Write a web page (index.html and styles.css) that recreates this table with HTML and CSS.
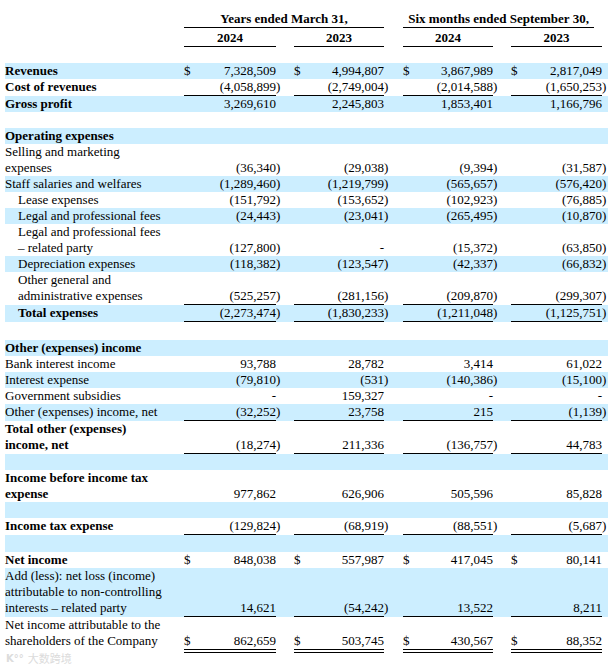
FILE: index.html
```html
<!DOCTYPE html>
<html lang="en">
<head>
<meta charset="utf-8">
<title>Statements of operations</title>
<link rel="stylesheet" href="styles.css">
</head>
<body>
<div class="page">
<table class="fin">
  <colgroup>
    <col class="c-lbl">
    <col class="c-cur"><col class="c-num1"><col class="c-par"><col class="c-gap">
    <col class="c-cur"><col class="c-num"><col class="c-par"><col class="c-gap2">
    <col class="c-cur"><col class="c-num"><col class="c-par"><col class="c-gap">
    <col class="c-cur"><col class="c-num4"><col class="c-par4">
  </colgroup>
  <thead>
    <tr class="h1">
      <td></td>
      <td colspan="6" class="hd"><div class="hline">Years ended March 31,</div></td>
      <td></td><td></td>
      <td colspan="6" class="hd"><div class="hline short">Six months ended September 30,</div></td>
      <td></td>
    </tr>
    <tr class="h2">
      <td></td>
      <td colspan="2" class="hd yr">2024</td><td></td><td></td>
      <td colspan="2" class="hd yr">2023</td><td></td><td></td>
      <td colspan="2" class="hd yr">2024</td><td></td><td></td>
      <td colspan="2" class="hd yr">2023</td><td></td>
    </tr>
    <tr class="sp"><td colspan="16"></td></tr>
  </thead>
  <tbody>
    <tr class="bl b">
      <td class="lbl">Revenues</td>
      <td class="cur">$</td><td class="num">7,328,509</td><td class="par"></td><td></td>
      <td class="cur">$</td><td class="num">4,994,807</td><td class="par"></td><td></td>
      <td class="cur">$</td><td class="num">3,867,989</td><td class="par"></td><td></td>
      <td class="cur">$</td><td class="num">2,817,049</td><td class="par"></td>
    </tr>
    <tr class="b ul">
      <td class="lbl">Cost of revenues</td>
      <td class="cur"></td><td class="num">(4,058,899</td><td class="par">)</td><td></td>
      <td class="cur"></td><td class="num">(2,749,004</td><td class="par">)</td><td></td>
      <td class="cur"></td><td class="num">(2,014,588</td><td class="par">)</td><td></td>
      <td class="cur"></td><td class="num">(1,650,253</td><td class="par">)</td>
    </tr>
    <tr class="bl b">
      <td class="lbl">Gross profit</td>
      <td class="cur"></td><td class="num">3,269,610</td><td class="par"></td><td></td>
      <td class="cur"></td><td class="num">2,245,803</td><td class="par"></td><td></td>
      <td class="cur"></td><td class="num">1,853,401</td><td class="par"></td><td></td>
      <td class="cur"></td><td class="num">1,166,796</td><td class="par"></td>
    </tr>
    <tr class="sp"><td colspan="16"></td></tr>

    <tr class="bl b">
      <td class="lbl" colspan="16">Operating expenses</td>
    </tr>
    <tr>
      <td class="lbl">Selling and marketing<br>expenses</td>
      <td class="cur"></td><td class="num">(36,340</td><td class="par">)</td><td></td>
      <td class="cur"></td><td class="num">(29,038</td><td class="par">)</td><td></td>
      <td class="cur"></td><td class="num">(9,394</td><td class="par">)</td><td></td>
      <td class="cur"></td><td class="num">(31,587</td><td class="par">)</td>
    </tr>
    <tr class="bl">
      <td class="lbl">Staff salaries and welfares</td>
      <td class="cur"></td><td class="num">(1,289,460</td><td class="par">)</td><td></td>
      <td class="cur"></td><td class="num">(1,219,799</td><td class="par">)</td><td></td>
      <td class="cur"></td><td class="num">(565,657</td><td class="par">)</td><td></td>
      <td class="cur"></td><td class="num">(576,420</td><td class="par">)</td>
    </tr>
    <tr>
      <td class="lbl ind">Lease expenses</td>
      <td class="cur"></td><td class="num">(151,792</td><td class="par">)</td><td></td>
      <td class="cur"></td><td class="num">(153,652</td><td class="par">)</td><td></td>
      <td class="cur"></td><td class="num">(102,923</td><td class="par">)</td><td></td>
      <td class="cur"></td><td class="num">(76,885</td><td class="par">)</td>
    </tr>
    <tr class="bl">
      <td class="lbl ind">Legal and professional fees</td>
      <td class="cur"></td><td class="num">(24,443</td><td class="par">)</td><td></td>
      <td class="cur"></td><td class="num">(23,041</td><td class="par">)</td><td></td>
      <td class="cur"></td><td class="num">(265,495</td><td class="par">)</td><td></td>
      <td class="cur"></td><td class="num">(10,870</td><td class="par">)</td>
    </tr>
    <tr>
      <td class="lbl ind">Legal and professional fees<br>– related party</td>
      <td class="cur"></td><td class="num">(127,800</td><td class="par">)</td><td></td>
      <td class="cur"></td><td class="num dash">-</td><td class="par"></td><td></td>
      <td class="cur"></td><td class="num">(15,372</td><td class="par">)</td><td></td>
      <td class="cur"></td><td class="num">(63,850</td><td class="par">)</td>
    </tr>
    <tr class="bl">
      <td class="lbl ind">Depreciation expenses</td>
      <td class="cur"></td><td class="num">(118,382</td><td class="par">)</td><td></td>
      <td class="cur"></td><td class="num">(123,547</td><td class="par">)</td><td></td>
      <td class="cur"></td><td class="num">(42,337</td><td class="par">)</td><td></td>
      <td class="cur"></td><td class="num">(66,832</td><td class="par">)</td>
    </tr>
    <tr class="ul">
      <td class="lbl ind">Other general and<br>administrative expenses</td>
      <td class="cur"></td><td class="num">(525,257</td><td class="par">)</td><td></td>
      <td class="cur"></td><td class="num">(281,156</td><td class="par">)</td><td></td>
      <td class="cur"></td><td class="num">(209,870</td><td class="par">)</td><td></td>
      <td class="cur"></td><td class="num">(299,307</td><td class="par">)</td>
    </tr>
    <tr class="bl b ul">
      <td class="lbl ind">Total expenses</td>
      <td class="cur"></td><td class="num">(2,273,474</td><td class="par">)</td><td></td>
      <td class="cur"></td><td class="num">(1,830,233</td><td class="par">)</td><td></td>
      <td class="cur"></td><td class="num">(1,211,048</td><td class="par">)</td><td></td>
      <td class="cur"></td><td class="num">(1,125,751</td><td class="par">)</td>
    </tr>
    <tr class="sp sp18"><td colspan="16"></td></tr>

    <tr class="bl b">
      <td class="lbl" colspan="16">Other (expenses) income</td>
    </tr>
    <tr>
      <td class="lbl">Bank interest income</td>
      <td class="cur"></td><td class="num">93,788</td><td class="par"></td><td></td>
      <td class="cur"></td><td class="num">28,782</td><td class="par"></td><td></td>
      <td class="cur"></td><td class="num">3,414</td><td class="par"></td><td></td>
      <td class="cur"></td><td class="num">61,022</td><td class="par"></td>
    </tr>
    <tr class="bl">
      <td class="lbl">Interest expense</td>
      <td class="cur"></td><td class="num">(79,810</td><td class="par">)</td><td></td>
      <td class="cur"></td><td class="num">(531</td><td class="par">)</td><td></td>
      <td class="cur"></td><td class="num">(140,386</td><td class="par">)</td><td></td>
      <td class="cur"></td><td class="num">(15,100</td><td class="par">)</td>
    </tr>
    <tr>
      <td class="lbl">Government subsidies</td>
      <td class="cur"></td><td class="num dash">-</td><td class="par"></td><td></td>
      <td class="cur"></td><td class="num">159,327</td><td class="par"></td><td></td>
      <td class="cur"></td><td class="num dash">-</td><td class="par"></td><td></td>
      <td class="cur"></td><td class="num dash">-</td><td class="par"></td>
    </tr>
    <tr class="bl ul">
      <td class="lbl">Other (expenses) income, net</td>
      <td class="cur"></td><td class="num">(32,252</td><td class="par">)</td><td></td>
      <td class="cur"></td><td class="num">23,758</td><td class="par"></td><td></td>
      <td class="cur"></td><td class="num">215</td><td class="par"></td><td></td>
      <td class="cur"></td><td class="num">(1,139</td><td class="par">)</td>
    </tr>
    <tr class="b ul">
      <td class="lbl">Total other (expenses)<br>income, net</td>
      <td class="cur"></td><td class="num">(18,274</td><td class="par">)</td><td></td>
      <td class="cur"></td><td class="num">211,336</td><td class="par"></td><td></td>
      <td class="cur"></td><td class="num">(136,757</td><td class="par">)</td><td></td>
      <td class="cur"></td><td class="num">44,783</td><td class="par"></td>
    </tr>
    <tr class="sp bl"><td colspan="16"></td></tr>

    <tr class="b">
      <td class="lbl">Income before income tax<br>expense</td>
      <td class="cur"></td><td class="num">977,862</td><td class="par"></td><td></td>
      <td class="cur"></td><td class="num">626,906</td><td class="par"></td><td></td>
      <td class="cur"></td><td class="num">505,596</td><td class="par"></td><td></td>
      <td class="cur"></td><td class="num">85,828</td><td class="par"></td>
    </tr>
    <tr class="sp bl"><td colspan="16"></td></tr>

    <tr class="b ul">
      <td class="lbl">Income tax expense</td>
      <td class="cur"></td><td class="num">(129,824</td><td class="par">)</td><td></td>
      <td class="cur"></td><td class="num">(68,919</td><td class="par">)</td><td></td>
      <td class="cur"></td><td class="num">(88,551</td><td class="par">)</td><td></td>
      <td class="cur"></td><td class="num">(5,687</td><td class="par">)</td>
    </tr>
    <tr class="sp sp17 bl"><td colspan="16"></td></tr>

    <tr class="b">
      <td class="lbl">Net income</td>
      <td class="cur">$</td><td class="num">848,038</td><td class="par"></td><td></td>
      <td class="cur">$</td><td class="num">557,987</td><td class="par"></td><td></td>
      <td class="cur">$</td><td class="num">417,045</td><td class="par"></td><td></td>
      <td class="cur">$</td><td class="num">80,141</td><td class="par"></td>
    </tr>
    <tr class="bl ul">
      <td class="lbl">Add (less): net loss (income)<br>attributable to non-controlling<br>interests – related party</td>
      <td class="cur"></td><td class="num">14,621</td><td class="par"></td><td></td>
      <td class="cur"></td><td class="num">(54,242</td><td class="par">)</td><td></td>
      <td class="cur"></td><td class="num">13,522</td><td class="par"></td><td></td>
      <td class="cur"></td><td class="num">8,211</td><td class="par"></td>
    </tr>
    <tr class="dbl">
      <td class="lbl">Net income attributable to the<br>shareholders of the Company</td>
      <td class="cur">$</td><td class="num">862,659</td><td class="par"></td><td></td>
      <td class="cur">$</td><td class="num">503,745</td><td class="par"></td><td></td>
      <td class="cur">$</td><td class="num">430,567</td><td class="par"></td><td></td>
      <td class="cur">$</td><td class="num">88,352</td><td class="par"></td>
    </tr>
  </tbody>
</table>
<div class="wm"><span class="wm-logo">K°°</span><span class="wm-txt">大数跨境</span></div>
</div>
</body>
</html>
```
FILE: styles.css
```css
html, body {
  margin: 0;
  padding: 0;
  background: #fff;
}
body {
  font-family: "Liberation Serif", "Times New Roman", "Noto Sans CJK SC", serif;
  font-size: 13px;
  color: #000;
}
.page {
  position: relative;
  width: 614px;
  height: 667px;
  overflow: hidden;
  padding: 11px 0 0 5px;
  box-sizing: border-box;
}
.fin {
  table-layout: fixed;
  width: 603px;
  border-collapse: separate;
  border-spacing: 0;
}
.c-lbl { width: 179px; }
.c-cur { width: 14px; }
.c-num1 { width: 78px; }
.c-num { width: 76px; }
.c-num4 { width: 77px; }
.c-par { width: 5px; }
.c-par4 { width: 6px; }
.c-gap { width: 13px; }
.c-gap2 { width: 14px; }

.fin td {
  padding: 0;
  line-height: 16px;
  height: 16px;
  vertical-align: bottom;
  white-space: nowrap;
}
.hd {
  text-align: center;
  font-weight: bold;
}
.h1 td { height: 17px; }
.hline {
  border-bottom: 1px solid #000;
  line-height: 16px;
}
.hline.short { margin-right: 8px; }
.h2 td { height: 18px; line-height: 17px; }
.h2 .yr { border-bottom: 1px solid #000; }

.sp td { height: 16px; }
.sp18 td { height: 18px; }
.sp17 td { height: 17px; }

.bl td { background: #cceeff; }
.b .lbl { font-weight: bold; }
.lbl { text-align: left; }
.ind { padding-left: 13px !important; }
.cur { text-align: left; }
.num { text-align: right; }
.par { text-align: left; }

.ul td { border-bottom: 1px solid transparent; }
.ul td.cur, .ul td.num { border-bottom-color: #000; }
.dbl td { border-bottom: 4px double transparent; }
.dbl td.cur, .dbl td.num { border-bottom-color: #000; }

.wm {
  position: absolute;
  left: 6px;
  top: 652px;
  display: flex;
  align-items: center;
  gap: 4px;
  color: #d6d6d6;
  font-family: "Noto Sans CJK SC", "DejaVu Sans", sans-serif;
  font-size: 11px;
  line-height: 13px;
  opacity: 0.85;
}
.wm-logo { font-family: "DejaVu Sans", sans-serif; font-weight: bold; font-size: 10px; }
```
